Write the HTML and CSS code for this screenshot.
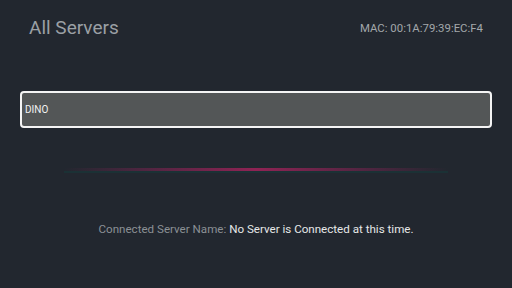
FILE: index.html
```html
<!DOCTYPE html>
<html>
<head>
<meta charset="utf-8">
<link rel="stylesheet" href="styles.css">
</head>
<body>
<div class="screen">
  <header class="top">
    <h1 class="title">All Servers</h1>
    <div class="mac">MAC: 00:1A:79:39:EC:F4</div>
  </header>
  <div class="list">
    <div class="server">DINO</div>
  </div>
  <div class="divider"></div>
  <div class="status"><span class="label">Connected Server Name:</span> <span class="value">No Server is Connected at this time.</span></div>
</div>
</body>
</html>
```

FILE: styles.css
```css
html, body {
  margin: 0;
  padding: 0;
  background: #22272f;
}
body {
  font-family: Roboto, "Noto Sans", sans-serif;
  width: 512px;
  height: 288px;
  overflow: hidden;
}
.screen {
  display: flex;
  flex-direction: column;
  padding: 0 20px;
}
.top {
  display: flex;
  justify-content: space-between;
  align-items: flex-start;
  padding: 16px 9px 0 9px;
  height: 76px;
  box-sizing: border-box;
}
.title {
  margin: 0;
  font-weight: 400;
  font-size: 19px;
  line-height: 24px;
  color: #9ba0a5;
}
.mac {
  font-size: 11.4px;
  line-height: 14px;
  margin-top: 5px;
  color: #a3a7ab;
}
.list {
  padding-top: 15px;
}
.server {
  height: 33px;
  border: 2px solid #f4f4f4;
  border-radius: 4px;
  background: #535657;
  color: #f2f2f2;
  font-size: 10px;
  line-height: 33px;
  padding-left: 3px;
}
.divider {
  margin: 40px 44px 0 44px;
  height: 3px;
  background: linear-gradient(to right, rgba(140,30,80,0) 0%, rgba(120,35,80,0.5) 20%, #8f2354 50%, rgba(120,35,80,0.5) 80%, rgba(140,30,80,0) 100%);
  box-shadow: 0 2px 0 rgba(20,60,60,0.5);
}
.status {
  margin-top: 51px;
  text-align: center;
  font-size: 11.6px;
  line-height: 14px;
}
.label {
  color: #8b9095;
}
.value {
  color: #e6e7e8;
}
```
